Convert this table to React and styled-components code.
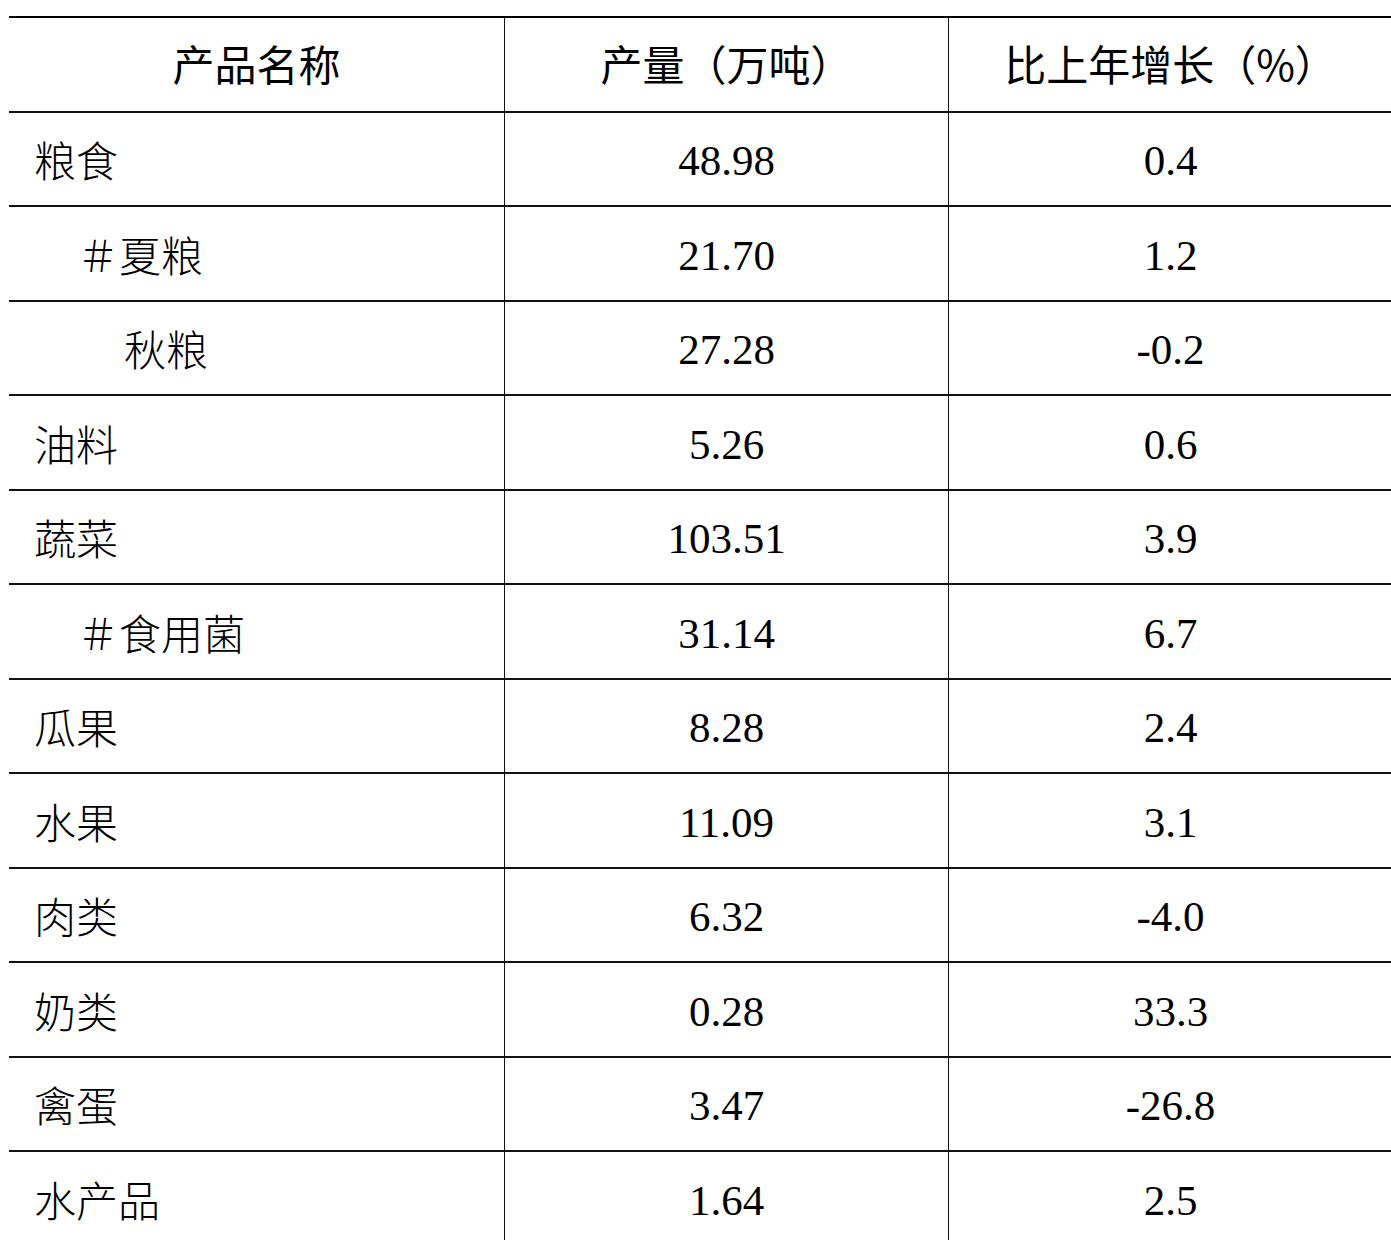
import React from "react";
import styled, { createGlobalStyle } from "styled-components";

const GlobalStyle = createGlobalStyle`
  html, body {
    margin: 0;
    padding: 0;
    background: #fff;
  }
  body {
    overflow: hidden;
  }
`;

const Page = styled.div`
  padding: 16px 0 0 9px;
`;

const Table = styled.div`
  width: 1383px;
  border-top: 2px solid #000;
`;

const Row = styled.div`
  display: grid;
  grid-template-columns: 495px 444px 444px;
  height: 94.5px;
  box-sizing: border-box;
  border-bottom: 2px solid #111;
`;

const Cell = styled.div`
  display: flex;
  align-items: center;
  justify-content: ${(p) => (p.$left ? "flex-start" : "center")};
  padding-left: ${(p) => (p.$left ? `${p.$indent}px` : "0")};
  border-left: ${(p) => (p.$first ? "none" : "1.5px solid #111")};
  font-family: "Liberation Serif", "Noto Sans CJK SC", serif;
  font-size: 42px;
  font-weight: 300;
  color: #000;
  white-space: nowrap;
`;

const HeadCell = styled(Cell)`
  font-family: "Noto Sans CJK SC", "Noto Sans", sans-serif;
  font-weight: 400;
  font-size: 42px;
  padding-bottom: 3px;
`;

const Name = styled.span`
  font-family: "Noto Sans CJK SC", sans-serif;
  font-weight: 300;
`;

const Num = styled.span`
  font-family: "Liberation Serif", serif;
  font-size: 43px;
  font-weight: 400;
  padding-top: 4px;
`;

const rows = [
  { name: "粮食", indent: 25, output: "48.98", growth: "0.4" },
  { name: "＃夏粮", indent: 68, output: "21.70", growth: "1.2" },
  { name: "秋粮", indent: 115, output: "27.28", growth: "-0.2" },
  { name: "油料", indent: 25, output: "5.26", growth: "0.6" },
  { name: "蔬菜", indent: 25, output: "103.51", growth: "3.9" },
  { name: "＃食用菌", indent: 68, output: "31.14", growth: "6.7" },
  { name: "瓜果", indent: 25, output: "8.28", growth: "2.4" },
  { name: "水果", indent: 25, output: "11.09", growth: "3.1" },
  { name: "肉类", indent: 25, output: "6.32", growth: "-4.0" },
  { name: "奶类", indent: 25, output: "0.28", growth: "33.3" },
  { name: "禽蛋", indent: 25, output: "3.47", growth: "-26.8" },
  { name: "水产品", indent: 25, output: "1.64", growth: "2.5" },
];

export default function App() {
  return (
    <Page>
      <GlobalStyle />
      <Table>
        <Row>
          <HeadCell $first>产品名称</HeadCell>
          <HeadCell>产量（万吨）</HeadCell>
          <HeadCell>比上年增长（%）</HeadCell>
        </Row>
        {rows.map((r) => (
          <Row key={r.name}>
            <Cell $first $left $indent={r.indent}>
              <Name>{r.name}</Name>
            </Cell>
            <Cell>
              <Num>{r.output}</Num>
            </Cell>
            <Cell>
              <Num>{r.growth}</Num>
            </Cell>
          </Row>
        ))}
      </Table>
    </Page>
  );
}
